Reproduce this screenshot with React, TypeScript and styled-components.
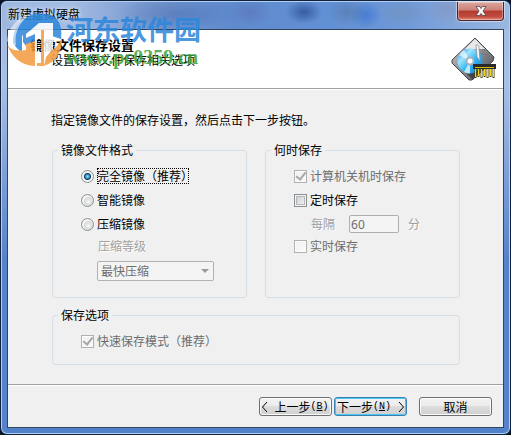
import React from 'react';
import styled, { createGlobalStyle, css } from 'styled-components';

const Global = createGlobalStyle`
  * { box-sizing: border-box; }
  body { margin: 0; background: #0a1426; }
  body, button, input, select {
    font: 12px/16px "Noto Sans CJK SC", sans-serif;
    color: #000;
  }
`;

const Window = styled.div`
  position: relative;
  display: flex;
  flex-direction: column;
  min-height: 100vh;
  padding: 0 6px 6px;
  border: 1px solid #10203c;
  border-radius: 7px;
  background:
    linear-gradient(180deg, #a3bbe0 0, #a3bbe0 22px, #a9c0e6 80px, #5482cc 260px) 0 0 / 7px 100% no-repeat,
    linear-gradient(180deg, #a3bbe0 0, #a9c0e6 80px, #5482cc 260px) 100% 0 / 7px 100% no-repeat,
    #5080c8;
  box-shadow: inset 0 0 0 1px #b4d0f0;
`;

const TitleBar = styled.header`
  display: flex;
  justify-content: space-between;
  height: 28px;
  margin: 0 -5px;
  padding-left: 6px;
  border-top: 1px solid #b4d0f0;
  border-radius: 6px 6px 0 0;
  background:
    radial-gradient(ellipse 18px 12px at 302px 10px, rgba(34,72,138,.7), rgba(34,72,138,0)),
    radial-gradient(ellipse 20px 14px at 345px 10px, rgba(80,115,155,.5), rgba(80,115,155,0)),
    radial-gradient(ellipse 16px 14px at 364px 13px, rgba(50,110,210,.6), rgba(50,110,210,0)),
    radial-gradient(ellipse 28px 14px at 400px 10px, rgba(115,145,180,.5), rgba(115,145,180,0)),
    radial-gradient(ellipse 24px 16px at 445px 8px, rgba(135,145,180,.5), rgba(135,145,180,0)),
    radial-gradient(ellipse 22px 14px at 248px 10px, rgba(90,100,170,.4), rgba(90,100,170,0)),
    radial-gradient(ellipse 60px 18px at 175px 12px, rgba(60,95,160,.4), rgba(60,95,160,0)),
    linear-gradient(90deg, #9db7df 0, #a4bce2 14%, #7c9cd2 27%, #5f8bce 45%, #6290d4 65%, #7099d8 80%, #9ab8e0 100%);
`;

const Caption = styled.h1`
  margin: 0;
  padding-top: 4px;
  font-size: 12px;
  font-weight: 400;
  text-shadow: 0 0 5px #fff;
`;

const CloseButton = styled.button`
  display: grid;
  place-items: center;
  width: 47px;
  height: 19px;
  margin-right: 5px;
  padding: 0;
  border: 1px solid #4e2030;
  border-top: 0;
  border-radius: 0 0 4px 4px;
  background: linear-gradient(#dba79f 0, #cd8078 45%, #b53a30 50%, #c04b40 80%, #dd8a74 100%);
  box-shadow: inset 0 0 0 1px rgba(255,255,255,.35), 0 0 1px 1px rgba(255,255,255,.5);
`;

const Client = styled.main`
  display: flex;
  flex: 1;
  flex-direction: column;
  border: 1px solid #31455f;
  background: #f0f0f0;
`;

const Banner = styled.section`
  display: flex;
  justify-content: space-between;
  height: 59px;
  padding: 7px 6px 0 22px;
  border-bottom: 1px solid #a0a0a0;
  background: #fff;
`;

const BannerTitle = styled.h2`
  margin: 0;
  font-size: 13px;
  line-height: 16px;
`;

const BannerNote = styled.p`
  margin: -1px 0 0 21px;
`;

const Body = styled.form`
  display: flex;
  flex: 1;
  flex-direction: column;
  border-top: 1px solid #fff;
`;

const Fields = styled.div`
  display: grid;
  grid-template-columns: 1fr 1fr;
  flex: 1;
  align-content: start;
  column-gap: 18px;
  row-gap: 9px;
  padding: 22px 43px 18px 44px;
`;

const Intro = styled.p`
  grid-column: 1 / -1;
  margin: 0 0 5px -1px;
`;

const Group = styled.fieldset<{ $wide?: boolean }>`
  min-width: 0;
  height: ${p => (p.$wide ? 58 : 156)}px;
  margin: 0;
  padding: 6px 28px 0;
  border: 1px solid #d5dfe5;
  border-radius: 3px;
  ${p => p.$wide && css`grid-column: 1 / -1;`}
`;

const Legend = styled.legend`
  margin-left: -23px;
  padding: 0 3px;
`;

const Row = styled.div<{ $tight?: boolean; $indent?: boolean }>`
  display: flex;
  align-items: center;
  height: ${p => (p.$tight ? 20 : 24)}px;
  padding-left: ${p => (p.$indent ? 17 : 0)}px;
`;

const Choice = styled.label<{ $off?: boolean }>`
  display: flex;
  align-items: center;
  gap: 3px;
  white-space: nowrap;
  color: ${p => (p.$off ? '#6d6d6d' : '#000')};
`;

const Focused = styled.span`
  width: 92px;
  outline: 1px dotted #000;
  outline-offset: -1px;
`;

const Radio = styled.input`
  appearance: none;
  width: 13px;
  height: 13px;
  margin: 0;
  border: 1px solid #8e8f8f;
  border-radius: 50%;
  background: radial-gradient(circle at 60% 60%, #fafafa 0, #d4d8dc 4px, #f4f4f4 5px);
  &:checked {
    background: radial-gradient(circle at 50% 50%, #8fe3ff 0, #2f92d0 2px, #0b3557 3px, #f4f4f4 4px);
  }
`;

const Check = styled.input`
  appearance: none;
  display: grid;
  place-items: center;
  width: 13px;
  height: 13px;
  margin: 0;
  border: 1px solid #8e8f8f;
  background: linear-gradient(135deg, #c4c9ce, #f8f8f8);
  box-shadow: inset 0 0 0 1px #f4f4f4, inset 0 0 0 2px #b4b8bc;
  &:disabled {
    border-color: #b1b1b1;
    background: linear-gradient(135deg, #f0f0f0, #fbfbfb);
    box-shadow: inset 0 0 0 1px #fbfbfb;
  }
  &:checked::after {
    content: "";
    width: 4px;
    height: 8px;
    margin-top: -2px;
    border: solid #a6a6ac;
    border-width: 0 2px 2px 0;
    transform: rotate(38deg);
  }
`;

const Muted = styled.label`
  color: #a0a0a0;
  text-shadow: 1px 1px 0 #fff;
`;

const SelectBox = styled.div`
  display: grid;
  align-items: center;
  width: 117px;
  margin: 5px 0 0 16px;
  & > * { grid-area: 1 / 1; }
  & > svg { justify-self: end; margin-right: 5px; pointer-events: none; }
`;

const Select = styled.select`
  appearance: none;
  width: 100%;
  height: 20px;
  padding: 0 3px;
  border: 1px solid #adb2b5;
  border-radius: 2px;
  background: #f4f4f4;
  color: #6d6d6d;
  opacity: 1;
`;

const Minutes = styled.input`
  width: 50px;
  height: 18px;
  margin: 0 9px 0 14px;
  padding: 0 1px;
  border: 1px solid #afafaf;
  border-radius: 2px;
  background: #f4f4f4;
  color: #6d6d6d;
  font-family: "Noto Sans", sans-serif;
  font-size: 12px;
`;

const Footer = styled.footer`
  display: flex;
  justify-content: flex-end;
  height: 43px;
  padding: 12px 11px 0;
  border-top: 1px solid #a0a0a0;
  box-shadow: inset 0 1px 0 #fff;
`;

const Button = styled.button<{ $primary?: boolean; $apart?: boolean }>`
  display: flex;
  align-items: center;
  justify-content: center;
  width: 73px;
  height: 19px;
  margin-left: ${p => (p.$apart ? 12 : 2)}px;
  padding: 0;
  border: 1px solid ${p => (p.$primary ? '#3c7fb1' : '#707070')};
  border-radius: 3px;
  background: linear-gradient(#f2f2f2 0, #ebebeb 50%, #dddddd 50%, #cfcfcf 100%);
  box-shadow: inset 0 0 0 1px ${p => (p.$primary ? '#48c8f0' : '#fbfbfb')};
  line-height: 16px;
  white-space: pre;
`;

const Latin = styled.span`
  font-family: "Liberation Mono", monospace;
  font-size: 10px;
`;

const Angle = styled.svg<{ $after?: boolean }>`
  flex: none;
  margin: ${p => (p.$after ? '0 0 0 7px' : '0 6px 0 0')};
  fill: none;
  stroke: #000;
`;

const Watermark = styled.div`
  position: absolute;
  top: 9px;
  left: 5px;
  display: flex;
  gap: 2px;
  opacity: .85;
  pointer-events: none;
`;

const SiteName = styled.div`
  margin-top: 2px;
  color: #2c87dc;
  font-size: 27px;
  font-weight: 700;
  line-height: 34px;
`;

const SiteUrl = styled.div`
  color: #3aa53a;
  font: 700 20px/22px "Liberation Serif", serif;
`;

function DiskIcon() {
  return (
    <svg width="46" height="46" viewBox="0 0 46 46" aria-hidden="true">
      <defs>
        <linearGradient id="metal" x1="0" y1="0" x2="1" y2="1">
          <stop offset="0" stopColor="#d4d4d8" />
          <stop offset=".45" stopColor="#929398" />
          <stop offset="1" stopColor="#48494f" />
        </linearGradient>
        <linearGradient id="disc" x1="0" y1="0" x2="1" y2="1">
          <stop offset="0" stopColor="#1a94e4" />
          <stop offset=".3" stopColor="#9fe4ff" />
          <stop offset=".55" stopColor="#35b8f4" />
          <stop offset="1" stopColor="#0f7cc8" />
        </linearGradient>
      </defs>
      <path d="M24 1 43 20 42 24 21 43 18 43 1 26 1 23Z" fill="url(#metal)" stroke="#45464c" />
      <path d="M24 2 34 12H14Z" fill="#e8e8ea" />
      <path d="M22 43 13 34 29 31Z" fill="#42434a" />
      <circle cx="19" cy="24" r="12.5" fill="url(#disc)" />
      <path d="M19 24 8 18A12.500 12.500 0 0 1 13 13Z" fill="#fff" opacity=".6" />
      <path d="M19 24 13 35A12.500 12.500 0 0 0 19 36.500Z" fill="#fff" opacity=".7" />
      <circle cx="19" cy="24" r="4.500" fill="#a7b0c0" />
      <circle cx="19" cy="24" r="2.500" fill="#fff" />
      <path d="M25 8q3-1 3 3l1 13-3-4z" fill="#f6f6f6" stroke="#85868c" strokeWidth=".7" />
      <path d="M31 13h5M30 17h9" stroke="#77787e" />
      <path d="M22 27h23v5H22z" fill="#29292b" />
      <path d="M24 30.500h19" stroke="#d8bd00" />
      <path d="M24.500 32v9M27.500 32v8M30.500 32v9M33.500 32v8M36.500 32v9M39.500 32v8M42.500 32v9" stroke="#4c4300" strokeWidth="2" />
      <path d="M24.500 32v8M27.500 32v7M30.500 32v8M33.500 32v7M36.500 32v8M39.500 32v7M42.500 32v8" stroke="#f1d619" />
    </svg>
  );
}

function SiteLogo() {
  return (
    <svg width="58" height="58" viewBox="0 0 58 58" aria-hidden="true">
      <path d="M7 33C6 14 24-3 47 6 55 11 56 20 55 29L46 26V13H33L16 26V43Q10 38 7 33Z" fill="#2c87dc" />
      <path d="M20 24 32 13H47V42H36V23L31 22V57H22V32Z" fill="#fff" />
      <path d="M33 13 20 24 20 28 29 24V31L20 36 17 32V24L31 12Z" fill="#2c87dc" />
      <path d="M0 31Q2 43 20 40V34L29 31V56Q7 55 0 31Z" fill="#f39b3e" />
      <path d="M35 20H38V56H31V53H35ZM46 40Q53 36 56 27 57 49 38 56L40 47Z" fill="#f39b3e" />
      <path d="M1 31C2 17 13 6 26 3 12 12 8 25 10 35Q4 36 1 31Z" fill="#fff" opacity=".6" />
    </svg>
  );
}

export default function App() {
  return (
    <>
      <Global />
      <Window>
        <TitleBar>
          <Caption>新建虚拟硬盘</Caption>
          <CloseButton type="button" aria-label="关闭">
            <svg width="12" height="10" viewBox="0 0 12 10" aria-hidden="true">
              <path d="M1 .5H4.500L6 2.500 7.500 .5H11L8 5 11 9.500H7.500L6 7.500 4.500 9.500H1L4 5Z" fill="#f6f6f6" stroke="#5c4048" strokeWidth=".8" />
            </svg>
          </CloseButton>
        </TitleBar>
        <Client>
          <Banner>
            <div>
              <BannerTitle>镜像文件保存设置</BannerTitle>
              <BannerNote>设置镜像文件保存相关选项</BannerNote>
            </div>
            <DiskIcon />
          </Banner>
          <Body onSubmit={e => e.preventDefault()}>
            <Fields>
              <Intro>指定镜像文件的保存设置，然后点击下一步按钮。</Intro>
              <Group>
                <Legend>镜像文件格式</Legend>
                <Row>
                  <Choice>
                    <Radio type="radio" name="format" defaultChecked />
                    <Focused>完全镜像（推荐）</Focused>
                  </Choice>
                </Row>
                <Row><Choice><Radio type="radio" name="format" />智能镜像</Choice></Row>
                <Row><Choice><Radio type="radio" name="format" />压缩镜像</Choice></Row>
                <Row $tight $indent><Muted htmlFor="level">压缩等级</Muted></Row>
                <SelectBox>
                  <Select id="level" disabled><option>最快压缩</option></Select>
                  <svg width="8" height="4" viewBox="0 0 8 4" aria-hidden="true"><path d="M0 0h8L4 4z" fill="#9a9a9a" /></svg>
                </SelectBox>
              </Group>
              <Group>
                <Legend>何时保存</Legend>
                <Row><Choice $off><Check type="checkbox" defaultChecked disabled />计算机关机时保存</Choice></Row>
                <Row><Choice><Check type="checkbox" />定时保存</Choice></Row>
                <Row $indent>
                  <Muted htmlFor="minutes">每隔</Muted>
                  <Minutes id="minutes" defaultValue="60" disabled />
                  <Muted htmlFor="minutes">分</Muted>
                </Row>
                <Row $tight><Choice $off><Check type="checkbox" disabled />实时保存</Choice></Row>
              </Group>
              <Group $wide>
                <Legend>保存选项</Legend>
                <Row><Choice $off><Check type="checkbox" defaultChecked disabled />快速保存模式（推荐）</Choice></Row>
              </Group>
            </Fields>
            <Footer>
              <Button type="button" aria-label="上一步(B)">
                <Angle width="6" height="10" viewBox="0 0 6 10" aria-hidden="true"><path d="M5 0 .5 5 5 10" /></Angle>
                上一步<Latin>(<u>B</u>)</Latin>
              </Button>
              <Button type="submit" $primary aria-label="下一步(N)">
                下一步<Latin>(<u>N</u>)</Latin>
                <Angle $after width="6" height="10" viewBox="0 0 6 10" aria-hidden="true"><path d="M1 0 5.500 5 1 10" /></Angle>
              </Button>
              <Button type="button" $apart>取消</Button>
            </Footer>
          </Body>
        </Client>
        <Watermark>
          <SiteLogo />
          <div>
            <SiteName>河东软件园</SiteName>
            <SiteUrl>www.pc0359.cn</SiteUrl>
          </div>
        </Watermark>
      </Window>
    </>
  );
}
